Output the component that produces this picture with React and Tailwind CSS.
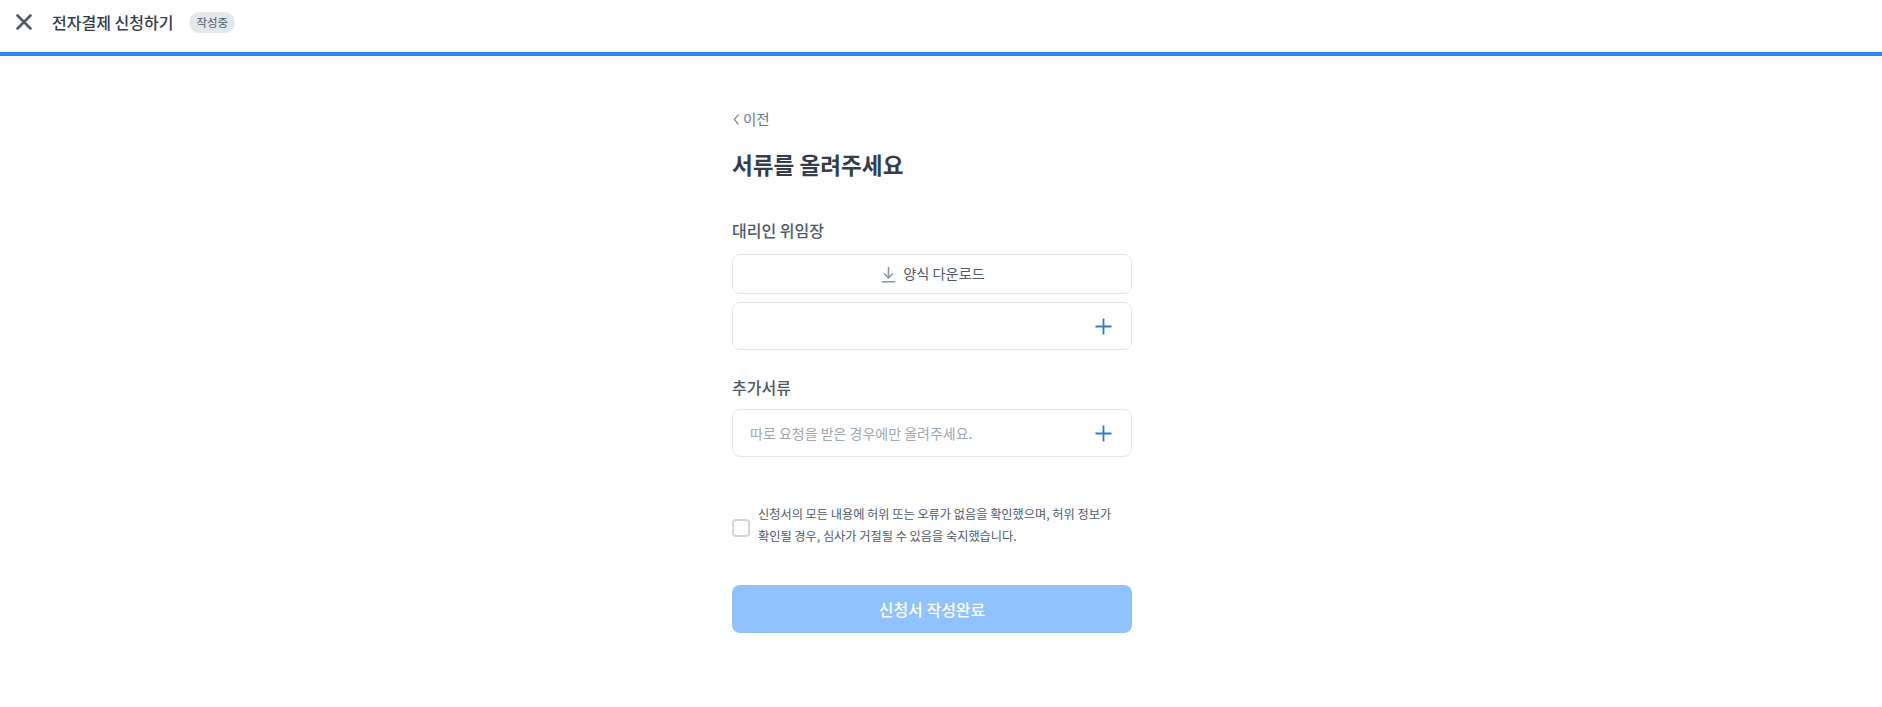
export default function App() {
  return (
    <div className="min-h-[707px] bg-white font-['Noto_Sans_CJK_KR','Noto_Sans',sans-serif] text-[#333d4b]">
      <header className="h-[56px] border-b-4 border-[#3182f6] flex items-center pl-[12px] pb-[8px]">
        <svg width="24" height="24" viewBox="0 0 24 24" fill="none" stroke="#4e5968" strokeWidth="2.6" strokeLinecap="round"><path d="M5.5 5.5l13 13M18.5 5.5l-13 13" /></svg>
        <h1 className="ml-[16px] text-[16px] leading-[24px] font-medium">전자결제 신청하기</h1>
        <span className="ml-[16px] h-[21px] px-[7px] rounded-full bg-[#e5e8eb] text-[11.5px] leading-[21px] text-[#4e5968]">작성중</span>
      </header>
      <div className="pr-[18px]">
        <main className="w-[400px] mx-auto pt-[52px]">
          <button className="flex items-center h-[22px] text-[14.5px] text-[#6b7684]">
            <svg width="10" height="14" viewBox="0 0 10 14" fill="none" stroke="#6b7684" strokeWidth="1.2"><path d="M6.5 2.5L2.5 7.5l4 5" /></svg>
            <span className="ml-[1px]">이전</span>
          </button>
          <h2 className="mt-[17px] text-[22.6px] leading-[36px] font-semibold">서류를 올려주세요</h2>
          <section className="mt-[35px]">
            <h3 className="text-[16px] leading-[24px] font-medium text-[#4e5968]">대리인 위임장</h3>
            <button className="mt-[12px] w-full h-[40px] rounded-[8px] border border-[#e5e8eb] flex items-center justify-center gap-[5px] text-[14.2px] text-[#4e5968]">
              <svg width="19" height="19" viewBox="0 0 18 18" fill="none" stroke="#8b95a1" strokeWidth="1.4"><path d="M9 2v10M4.8 8L9 12.2 13.2 8M2.5 15.8h13" /></svg>
              양식 다운로드
            </button>
            <div className="mt-[8px] h-[48px] rounded-[8px] border border-[#e5e8eb] flex items-center justify-end pr-[19px]">
              <PlusIcon />
            </div>
          </section>
          <section className="mt-[25px]">
            <h3 className="text-[16px] leading-[24px] font-medium text-[#4e5968]">추가서류</h3>
            <div className="mt-[10px] h-[48px] rounded-[8px] border border-[#e5e8eb] flex items-center justify-between pl-[17px] pr-[19px]">
              <span className="text-[14px] text-[#a0a6ad]">따로 요청을 받은 경우에만 올려주세요.</span>
              <PlusIcon />
            </div>
          </section>
          <label className="mt-[47px] flex items-start">
            <span className="mt-[15px] w-[18px] h-[18px] rounded-[4px] border-2 border-[#d1d6db] shrink-0" />
            <span className="ml-[8px] text-[12.2px] leading-[21.5px] text-[#4e5968]">
              신청서의 모든 내용에 허위 또는 오류가 없음을 확인했으며, 허위 정보가<br />확인될 경우, 심사가 거절될 수 있음을 숙지했습니다.
            </span>
          </label>
          <button className="mt-[38px] w-full h-[48px] rounded-[8px] bg-[#90c2ff] text-white text-[16px] font-medium">신청서 작성완료</button>
        </main>
      </div>
    </div>
  );
}

function PlusIcon() {
  return (
    <svg width="17" height="17" viewBox="0 0 17 17" fill="none" stroke="#3178d4" strokeWidth="1.8"><path d="M8.5 0.5v16M0.5 8.5h16" /></svg>
  );
}
